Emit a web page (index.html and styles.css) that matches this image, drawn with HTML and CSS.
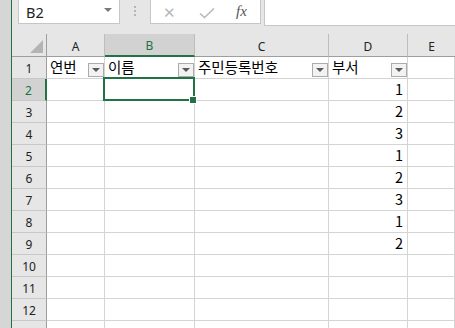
FILE: index.html
```html
<!DOCTYPE html>
<html lang="ko">
<head>
    <meta charset="UTF-8">
    <title>Sheet1</title>
    <link rel="stylesheet" href="styles.css">
</head>
<body>
    <div class="strip"></div>
    <div class="main">
        <!-- name box + formula bar -->
        <div class="toolbar">
            <div class="namebox">
                <span>B2</span>
                <span class="nb-arrow"></span>
            </div>
            <div class="grip"><i></i><i></i><i></i></div>
            <div class="fbuttons">
                <span class="fb-x">✕</span>
                <span class="fb-ok">
                    <svg width="16" height="12" viewBox="0 0 16 12"><path d="M1 6.5 L5.5 10.5 L15 1.5" fill="none" stroke="#b8b8b8" stroke-width="1.6"/></svg>
                </span>
                <span class="fb-fx">fx</span>
            </div>
            <div class="formula"></div>
        </div>

        <div class="sheet">
            <div class="hd corner"><span class="tri"></span></div>
            <div class="hd col">A</div>
            <div class="hd col sel">B</div>
            <div class="hd col">C</div>
            <div class="hd col">D</div>
            <div class="hd col last">E</div>

            <div class="hd row">1</div>
            <div class="cell filt"><span>연번</span><span class="fbtn"></span></div>
            <div class="cell filt"><span>이름</span><span class="fbtn"></span></div>
            <div class="cell filt"><span>주민등록번호</span><span class="fbtn"></span></div>
            <div class="cell filt"><span>부서</span><span class="fbtn"></span></div>
            <div class="cell"></div>

            <div class="hd row sel">2</div>
            <div class="cell"></div>
            <div class="cell active"><span class="handle"></span></div>
            <div class="cell"></div>
            <div class="cell num">1</div>
            <div class="cell"></div>

            <div class="hd row">3</div>
            <div class="cell"></div><div class="cell"></div><div class="cell"></div>
            <div class="cell num">2</div><div class="cell"></div>

            <div class="hd row">4</div>
            <div class="cell"></div><div class="cell"></div><div class="cell"></div>
            <div class="cell num">3</div><div class="cell"></div>

            <div class="hd row">5</div>
            <div class="cell"></div><div class="cell"></div><div class="cell"></div>
            <div class="cell num">1</div><div class="cell"></div>

            <div class="hd row">6</div>
            <div class="cell"></div><div class="cell"></div><div class="cell"></div>
            <div class="cell num">2</div><div class="cell"></div>

            <div class="hd row">7</div>
            <div class="cell"></div><div class="cell"></div><div class="cell"></div>
            <div class="cell num">3</div><div class="cell"></div>

            <div class="hd row">8</div>
            <div class="cell"></div><div class="cell"></div><div class="cell"></div>
            <div class="cell num">1</div><div class="cell"></div>

            <div class="hd row">9</div>
            <div class="cell"></div><div class="cell"></div><div class="cell"></div>
            <div class="cell num">2</div><div class="cell"></div>

            <div class="hd row">10</div>
            <div class="cell"></div><div class="cell"></div><div class="cell"></div>
            <div class="cell"></div><div class="cell"></div>

            <div class="hd row">11</div>
            <div class="cell"></div><div class="cell"></div><div class="cell"></div>
            <div class="cell"></div><div class="cell"></div>

            <div class="hd row">12</div>
            <div class="cell"></div><div class="cell"></div><div class="cell"></div>
            <div class="cell"></div><div class="cell"></div>

            <div class="hd row"></div>
            <div class="cell"></div><div class="cell"></div><div class="cell"></div>
            <div class="cell"></div><div class="cell"></div>
        </div>
    </div>
</body>
</html>
```

FILE: styles.css
```css
html, body {
    margin: 0;
    height: 100%;
    overflow: hidden;
}
body {
    display: flex;
    background: #e6e6e6;
    font-family: "Noto Sans", "Noto Sans CJK KR", sans-serif;
}
.strip {
    width: 11px;
    flex: none;
    background: #d6d6d6;
    border-right: 1px solid #217346;
}
.main {
    flex: 1;
    min-width: 0;
}

/* formula bar */
.toolbar {
    display: flex;
    height: 24px;
    margin-bottom: 10px;
}
.namebox {
    box-sizing: border-box;
    width: 102px;
    height: 25px;
    margin: -1px 0 0 6px;
    background: #fff;
    border: 1px solid #c6c6c6;
    display: flex;
    align-items: center;
    justify-content: space-between;
    padding: 0 7px 0 7px;
    font-size: 14.5px;
    color: #222;
}
.nb-arrow {
    width: 0;
    height: 0;
    border-left: 4px solid transparent;
    border-right: 4px solid transparent;
    border-top: 4px solid #7a7a7a;
    margin-top: -4px;
}
.grip {
    width: 30px;
    display: flex;
    flex-direction: column;
    align-items: center;
    justify-content: center;
    gap: 2px;
    padding-bottom: 2px;
}
.grip i {
    width: 2px;
    height: 2px;
    background: #b5b5b5;
}
.fbuttons {
    box-sizing: border-box;
    width: 111px;
    height: 25px;
    margin-top: -1px;
    background: #fff;
    border: 1px solid #c6c6c6;
    display: flex;
    align-items: center;
    padding-left: 12px;
}
.fb-x {
    color: #b8b8b8;
    font-size: 15px;
    width: 36px;
}
.fb-ok {
    width: 36px;
    display: flex;
    padding-top: 2px;
}
.fb-fx {
    font-family: "Liberation Serif", serif;
    font-style: italic;
    font-size: 15px;
    color: #555;
    padding-left: 1px;
}
.formula {
    flex: 1;
    height: 25px;
    margin: -1px 0 0 3px;
    background: #fff;
    border: 1px solid #c6c6c6;
    border-right: 0;
}

/* grid */
.sheet {
    display: grid;
    grid-template-columns: 35px 58px 90px 134px 79px 1fr;
    grid-template-rows: 23px;
    grid-auto-rows: 22px;
    background: #fff;
}
.sheet > div {
    box-sizing: border-box;
    border-right: 1px solid #d4d4d4;
    border-bottom: 1px solid #d4d4d4;
}
.hd {
    background: #e6e6e6;
    color: #222;
    font-size: 12px;
    display: flex;
    align-items: center;
    justify-content: center;
}
.sheet > .col {
    border-right-color: #bdbdbd;
    border-bottom-color: #9e9e9e;
    padding-top: 2px;
}
.sheet > .col.last {
    border-right: 0;
}
.sheet > .row {
    border-right-color: #9e9e9e;
    border-bottom-color: #c8c8c8;
    padding-top: 1px;
}
.sheet > .corner {
    border-right-color: #9e9e9e;
    border-bottom-color: #9e9e9e;
    justify-content: flex-end;
    align-items: flex-end;
    padding: 0 3px 3px 0;
}
.tri {
    width: 0;
    height: 0;
    border-left: 13px solid transparent;
    border-bottom: 13px solid #b4b4b4;
}
.sheet > .col.sel {
    background: #d2d2d2;
    color: #217346;
    border-bottom: 2px solid #217346;
}
.sheet > .row.sel {
    background: #d2d2d2;
    color: #217346;
    border-right: 2px solid #217346;
}

.cell {
    font-family: "Noto Sans CJK KR", sans-serif;
    font-size: 14.5px;
    color: #000;
    display: flex;
    align-items: center;
    padding: 0 3px;
    line-height: 1;
}
.cell.filt {
    justify-content: space-between;
    padding-right: 0;
}
.cell.num {
    justify-content: flex-end;
    padding-right: 4px;
}
.fbtn {
    align-self: flex-end;
    box-sizing: border-box;
    width: 16px;
    height: 14px;
    margin-bottom: 1px;
    background: #f2f2f2;
    border: 1px solid #ababab;
    display: flex;
    align-items: center;
    justify-content: center;
}
.fbtn::after {
    content: "";
    width: 0;
    height: 0;
    border-left: 4px solid transparent;
    border-right: 4px solid transparent;
    border-top: 4px solid #595959;
}

/* active cell */
.cell.active {
    position: relative;
}
.cell.active::after {
    content: "";
    position: absolute;
    top: -2px;
    left: -2px;
    right: -1px;
    bottom: -1px;
    border: 2px solid #217346;
}
.handle {
    position: absolute;
    right: -3px;
    bottom: -4px;
    width: 6px;
    height: 6px;
    background: #217346;
    border: 1px solid #fff;
    z-index: 1;
}
```
